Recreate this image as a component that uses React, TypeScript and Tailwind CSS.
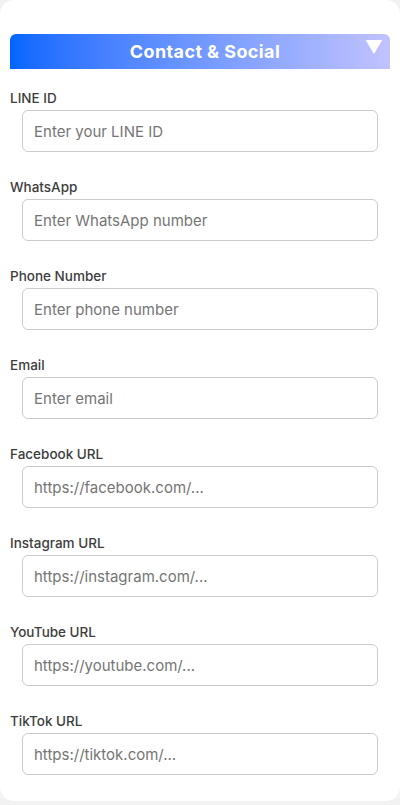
import React from "react";

const fields = [
  { label: "LINE ID", placeholder: "Enter your LINE ID" },
  { label: "WhatsApp", placeholder: "Enter WhatsApp number" },
  { label: "Phone Number", placeholder: "Enter phone number" },
  { label: "Email", placeholder: "Enter email" },
  { label: "Facebook URL", placeholder: "https://facebook.com/..." },
  { label: "Instagram URL", placeholder: "https://instagram.com/..." },
  { label: "YouTube URL", placeholder: "https://youtube.com/..." },
  { label: "TikTok URL", placeholder: "https://tiktok.com/..." },
];

export default function App() {
  return (
    <div
      className="min-h-screen bg-[#f2f2f2]"
      style={{ fontFamily: "Inter, 'Noto Sans', sans-serif" }}
    >
      <div className="bg-white rounded-[14px] px-[10px] pt-[34px] pb-[26px]">
        <div className="relative h-[35px] rounded-t-[6px] bg-gradient-to-r from-[#0066ff] to-[#c2c2ff] flex items-center justify-center pl-[10px]">
          <span className="text-white font-bold text-[18px] tracking-[0.4px] leading-none">
            Contact &amp; Social
          </span>
          <span className="absolute right-[7px] top-[5px] text-white text-[18px] leading-none">
            ▼
          </span>
        </div>
        <div className="pt-[19px] flex flex-col gap-[25px]">
          {fields.map((f) => (
            <div key={f.label} className="flex flex-col">
              <label className="text-[13.5px] leading-[20px] font-medium text-[#3d3d3d] mb-[2px]">
                {f.label}
              </label>
              <input
                type="text"
                placeholder={f.placeholder}
                className="mx-[12px] h-[42px] rounded-[6px] border border-[#cccccc] px-[11px] text-[15px] text-[#333] placeholder:text-[#757575] outline-none bg-white"
              />
            </div>
          ))}
        </div>
      </div>
    </div>
  );
}
